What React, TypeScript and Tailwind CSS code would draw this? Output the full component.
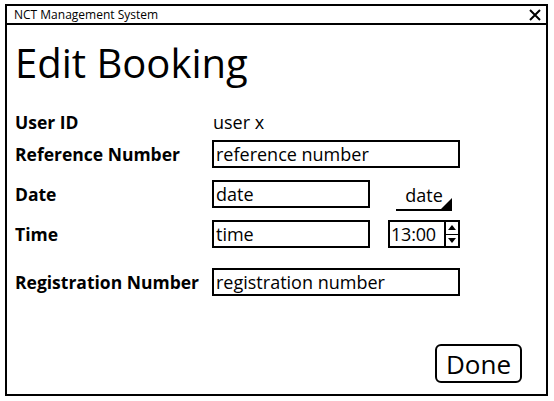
export default function App() {
  const font = { fontFamily: '"Open Sans", "DejaVu Sans", sans-serif' }

  return (
    <div className="w-[554px] h-[401px] bg-white overflow-hidden pt-[4px] pl-[5px]" style={font}>
      {/* Window frame */}
      <div className="w-[543px] h-[392px] border-2 border-black flex flex-col text-black">
        {/* Title bar */}
        <div className="h-[19px] border-b-2 border-black flex items-center justify-between pl-[7px] pr-[5px]">
          <span className="text-[12px] leading-none">NCT Management System</span>
          <svg width="12" height="12" viewBox="0 0 12 12">
            <path d="M1 1 L11 11 M11 1 L1 11" stroke="black" strokeWidth="2" />
          </svg>
        </div>

        {/* Content */}
        <div className="flex-1 flex flex-col pl-[8px]">
          <h1 className="mt-[18px] text-[40px] leading-[40px]">Edit Booking</h1>

          <div className="mt-[25px] flex flex-col">
            <div className="flex items-center h-[28px]">
              <div className="w-[197px] font-bold text-[17.5px]">User ID</div>
              <div className="pl-[1px] text-[18px]">user x</div>
            </div>

            <div className="flex items-center h-[28px] mt-[4px]">
              <div className="w-[197px] font-bold text-[17.5px]">Reference Number</div>
              <div className="w-[248px] h-[28px] border-2 border-black pl-[2px] flex items-center text-[18px]">
                reference number
              </div>
            </div>

            <div className="flex items-start h-[28px] mt-[12px]">
              <div className="w-[197px] h-[28px] flex items-center font-bold text-[17.5px]">Date</div>
              <div className="w-[158px] h-[28px] border-2 border-black pl-[2px] flex items-center text-[18px]">
                date
              </div>
              {/* date picker */}
              <div className="relative ml-[26px] w-[56px] h-[31px] border-b-2 border-black flex justify-center pt-[2px] text-[18px]">
                date
                <svg className="absolute right-0 bottom-0" width="11" height="11" viewBox="0 0 11 11">
                  <polygon points="0,11 11,11 11,0" fill="black" />
                </svg>
              </div>
            </div>

            <div className="flex items-center h-[28px] mt-[12px]">
              <div className="w-[197px] font-bold text-[17.5px]">Time</div>
              <div className="w-[158px] h-[28px] border-2 border-black pl-[2px] flex items-center text-[18px]">
                time
              </div>
              {/* time spinner */}
              <div className="ml-[18px] w-[72px] h-[28px] border-2 border-black flex">
                <div className="flex-1 flex items-center pl-[1px] text-[18px] tracking-[-0.2px]">13:00</div>
                <div className="w-[14px] border-l-2 border-black flex flex-col">
                  <div className="flex-1 flex items-center justify-center border-b border-black">
                    <svg width="8" height="5" viewBox="0 0 8 5">
                      <polygon points="0,5 8,5 4,0" fill="black" />
                    </svg>
                  </div>
                  <div className="flex-1 flex items-center justify-center">
                    <svg width="8" height="5" viewBox="0 0 8 5">
                      <polygon points="0,0 8,0 4,5" fill="black" />
                    </svg>
                  </div>
                </div>
              </div>
            </div>

            <div className="flex items-center h-[28px] mt-[20px]">
              <div className="w-[197px] font-bold text-[17.5px]">Registration Number</div>
              <div className="w-[248px] h-[28px] border-2 border-black pl-[2px] flex items-center text-[18px]">
                registration number
              </div>
            </div>
          </div>

          <div className="flex-1" />

          <div className="flex justify-end pr-[24px] pb-[11px]">
            <button className="w-[87px] h-[39px] border-2 border-black rounded-md flex items-center justify-center text-[26px] leading-none">
              Done
            </button>
          </div>
        </div>
      </div>
    </div>
  )
}
